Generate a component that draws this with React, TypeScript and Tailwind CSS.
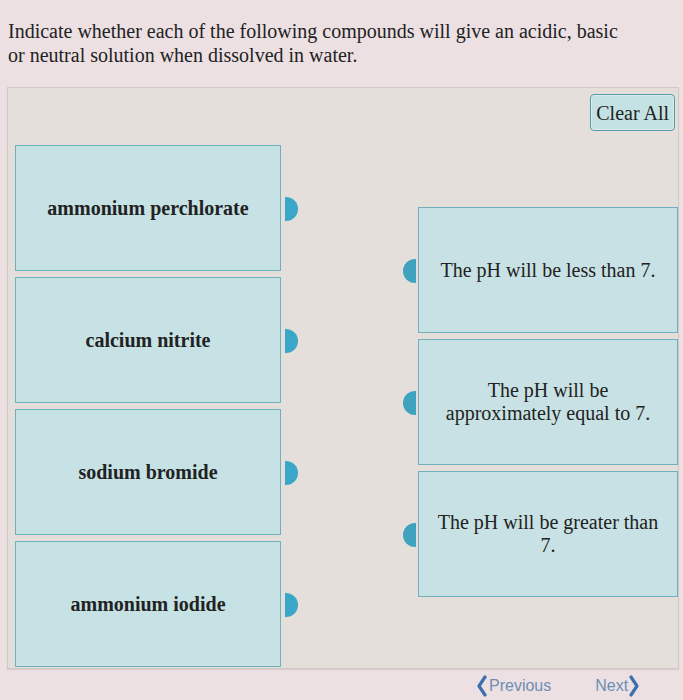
import React from "react";

const leftItems = ["ammonium perchlorate", "calcium nitrite", "sodium bromide", "ammonium iodide"];
const rightItems = [
  "The pH will be less than 7.",
  "The pH will be approximately equal to 7.",
  "The pH will be greater than 7.",
];

function Nub({ side }: { side: "left" | "right" }) {
  return side === "right" ? (
    <span className="absolute top-1/2 -right-[18px] -mt-[11px] h-[24px] w-[13px] rounded-r-full bg-[#3aa7c9]" />
  ) : (
    <span className="absolute top-1/2 -left-[16px] -mt-[11px] h-[24px] w-[13px] rounded-l-full bg-[#3fa3bf]" />
  );
}

function Chevron({ dir }: { dir: "left" | "right" }) {
  return (
    <svg width="12" height="22" viewBox="0 0 12 22" className="shrink-0">
      <path
        d={dir === "left" ? "M9 2 L3 11 L9 20" : "M3 2 L9 11 L3 20"}
        fill="none"
        stroke="#3a6fb0"
        strokeWidth="3.2"
        strokeLinecap="round"
        strokeLinejoin="round"
      />
    </svg>
  );
}

export default function App() {
  return (
    <div className="h-[700px] w-[683px] overflow-hidden bg-[#ece0e3] font-['Liberation_Serif',serif] text-[#222]">
      <p className="px-[8px] pt-[19px] text-[20px] leading-[24px]">
        Indicate whether each of the following compounds will give an acidic, basic
        <br />
        or neutral solution when dissolved in water.
      </p>

      <div className="ml-[7px] mr-[4px] mt-[20px] h-[582px] border border-[#cfcac4] bg-[#e4dfdb] shadow-[0_1px_1px_rgba(0,0,0,0.08)]">
        <div className="flex justify-end pr-[3px] pt-[6px]">
          <button className="h-[37px] rounded-[4px] border border-[#5a9aa6] bg-[#c4e1e4] px-[5px] text-[20px] text-[#222] shadow-[inset_0_0_0_1px_rgba(255,255,255,0.4)]">
            Clear All
          </button>
        </div>

        <div className="flex">
          <div className="ml-[7px] mt-[14px] flex w-[266px] flex-col gap-[6px]">
            {leftItems.map((t) => (
              <div
                key={t}
                className="relative flex h-[126px] items-center justify-center border border-[#6fb0bd] bg-[#c7e2e5] text-[20px] font-bold"
              >
                {t}
                <Nub side="right" />
              </div>
            ))}
          </div>

          <div className="ml-[137px] mt-[76px] flex w-[260px] flex-col gap-[6px]">
            {rightItems.map((t) => (
              <div
                key={t}
                className="relative flex h-[126px] items-center justify-center border border-[#6fb0bd] bg-[#c7e1e4] px-[18px] text-center text-[20px] leading-[23px]"
              >
                {t}
                <Nub side="left" />
              </div>
            ))}
          </div>
        </div>
      </div>

      <div className="flex items-center pl-[476px] pt-[5px] font-['Liberation_Sans',sans-serif] text-[16px] text-[#6d8fb3]">
        <Chevron dir="left" />
        <span className="ml-[1px]">Previous</span>
        <span className="ml-[44px]">Next</span>
        <Chevron dir="right" />
      </div>
    </div>
  );
}
